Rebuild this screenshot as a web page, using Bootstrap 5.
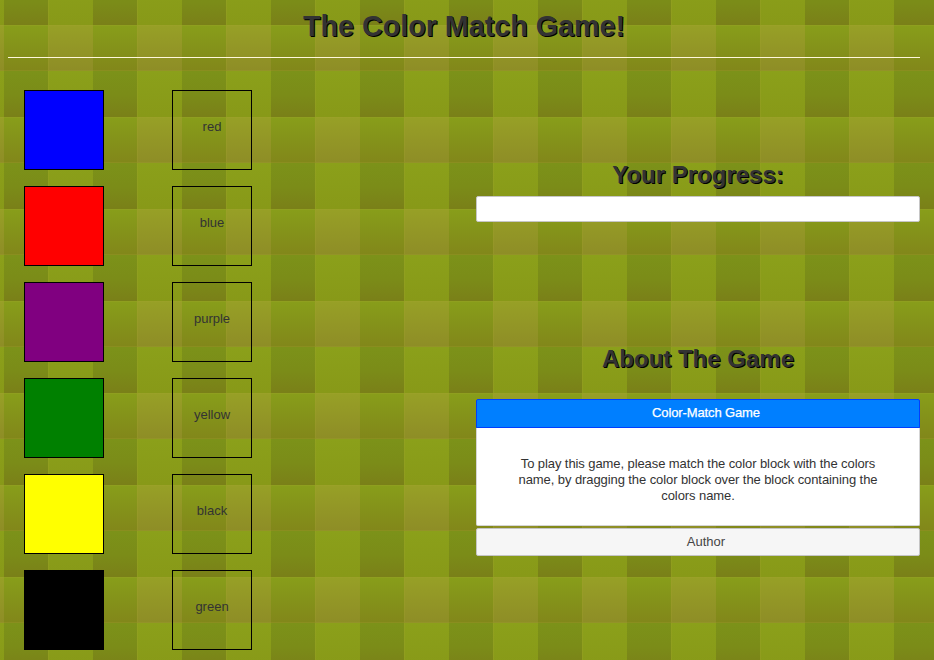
<!DOCTYPE html>
<html lang="en">
<head>
<meta charset="utf-8">
<title>The Color Match Game!</title>
<link href="https://cdn.jsdelivr.net/npm/bootstrap@5.3.0/dist/css/bootstrap.min.css" rel="stylesheet">
<style>
body{font:13px/16px "Liberation Sans",Arial,sans-serif;color:#333;height:660px;overflow:hidden;
background:url("data:image/svg+xml,%3Csvg xmlns='http://www.w3.org/2000/svg' width='89' height='92'%3E%3Cdefs%3E%3ClinearGradient id='a' x2='0' y2='1'%3E%3Cstop stop-color='%237c9219'/%3E%3Cstop offset='.5' stop-color='%237b8c18'/%3E%3Cstop offset='1' stop-color='%237a8018'/%3E%3C/linearGradient%3E%3ClinearGradient id='b' x2='0' y2='1'%3E%3Cstop stop-color='%238ba01a'/%3E%3Cstop offset='1' stop-color='%23889918'/%3E%3C/linearGradient%3E%3ClinearGradient id='c' x2='0' y2='1'%3E%3Cstop stop-color='%23889e1a'/%3E%3Cstop offset='.5' stop-color='%2384921a'/%3E%3Cstop offset='1' stop-color='%2382871a'/%3E%3C/linearGradient%3E%3ClinearGradient id='d' x2='0' y2='1'%3E%3Cstop stop-color='%2397a026'/%3E%3Cstop offset='1' stop-color='%238e8d26'/%3E%3C/linearGradient%3E%3C/defs%3E%3Cpath fill='url(%23c)' d='M0 0h44v46H0z'/%3E%3Cpath fill='url(%23d)' d='M44 0h45v46H44z'/%3E%3Cpath fill='url(%23a)' d='M0 46h44v46H0z'/%3E%3Cpath fill='url(%23b)' d='M44 46h45v46H44z'/%3E%3Cpath fill='%23a5a530' fill-opacity='.25' d='M0 0h89v1H0zM0 45h89v1H0zM44 0h1v92h-1z'/%3E%3C/svg%3E") 4px 25px}
h1,h2{font-weight:700;text-shadow:1px 1px 0 #000;margin:0}
h1{font-size:28.7px;line-height:36px}
h2{font-size:24px;line-height:28px}
.page{padding:8px 14px 0 8px}
.title-bar{height:50px;border-bottom:1px solid #fff8dc}
.tiles{width:468px;padding:32px 0 0 16px}
.tiles-col{width:148px;gap:16px}
.tile{width:80px;height:80px;border:1px solid #000;padding-top:28px}
.blue{background:#00f}.red{background:red}.purple{background:purple}.green{background:green}.yellow{background:#ff0}.black{background:#000}
.side{width:444px;padding-top:103px}
.meter{height:26px;margin-top:7px;border:1px solid #c6c6c6;border-radius:2px;background:#fff}
.about{margin-top:123px}
.tab-on{height:29px;margin-top:26px;padding:5px 0 0 16px;border:1px solid #003eff;border-radius:2px 2px 0 0;background:#007fff;color:#fff;letter-spacing:-.12px;-webkit-text-stroke:.25px #fff}
.panel-text{height:98px;padding-top:28px;border:1px solid #d5d5d5;border-top:0;border-radius:0 0 2px 2px;background:#fff;letter-spacing:-.085px}
.tab-off{height:28px;margin-top:2px;padding:5px 0 0 16px;border:1px solid #c5c5c5;border-radius:2px;background:#f6f6f6;color:#454545}
</style>
<script src="https://cdn.jsdelivr.net/npm/bootstrap@5.3.0/dist/js/bootstrap.bundle.min.js"></script>
</head>
<body>
<div class="page">
<header class="title-bar text-center"><h1>The Color Match Game!</h1></header>
<main class="d-flex">
<section class="tiles d-flex flex-shrink-0">
<div class="tiles-col d-flex flex-column">
<div class="tile blue"></div><div class="tile red"></div><div class="tile purple"></div><div class="tile green"></div><div class="tile yellow"></div><div class="tile black"></div>
</div>
<div class="tiles-col d-flex flex-column text-center">
<div class="tile">red</div><div class="tile">blue</div><div class="tile">purple</div><div class="tile">yellow</div><div class="tile">black</div><div class="tile">green</div>
</div>
</section>
<section class="side text-center">
<h2>Your Progress:</h2>
<div class="meter"></div>
<h2 class="about">About The Game</h2>
<div class="tab-on">Color-Match Game</div>
<div class="panel-text">To play this game, please match the color block with the colors<br>name, by dragging the color block over the block containing the<br>colors name.</div>
<div class="tab-off">Author</div>
</section>
</main>
</div>
</body>
</html>
